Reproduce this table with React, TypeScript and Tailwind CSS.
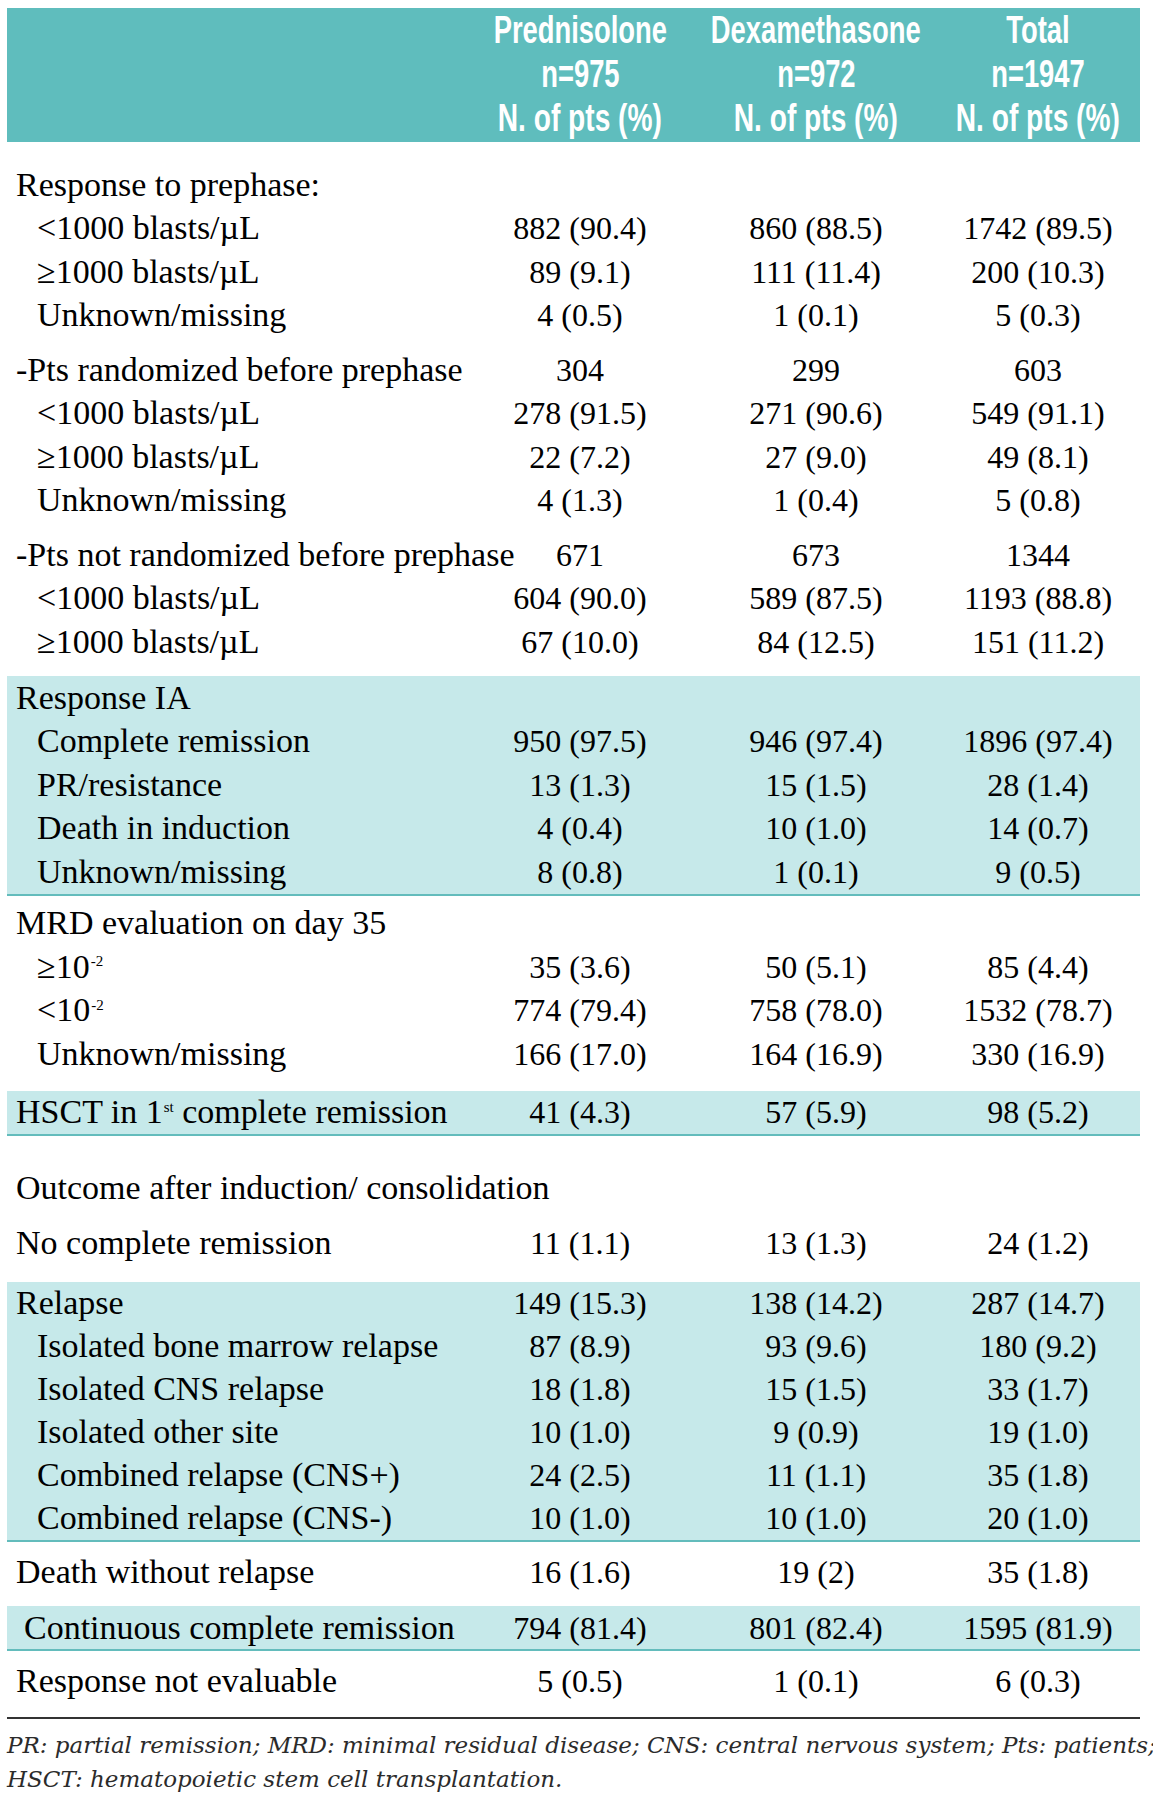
import React from 'react';

type RowData = {
  label: React.ReactNode;
  a?: string;
  b?: string;
  c?: string;
  indent?: 'none' | 'sub' | 'half';
};

const serif = { fontFamily: '"Liberation Serif", "Times New Roman", serif' };

function Row({ label, a = '', b = '', c = '', indent = 'none', tall }: RowData & { tall?: 'sm' | 'md' }) {
  const pad = indent === 'sub' ? 'pl-[30px]' : indent === 'half' ? 'pl-[17px]' : 'pl-[9px]';
  const h = tall === 'sm' ? 'h-[43px]' : 'h-[43.5px]';
  return (
    <div className={`grid grid-cols-[457px_232px_240px_204px] items-center ${h}`}>
      <div className={`${pad} text-[34px] leading-none whitespace-nowrap text-black`}>{label}</div>
      <div className="text-center text-[32px] leading-none whitespace-nowrap text-black">{a}</div>
      <div className="text-center text-[32px] leading-none whitespace-nowrap text-black">{b}</div>
      <div className="text-center text-[32px] leading-none whitespace-nowrap text-black">{c}</div>
    </div>
  );
}

function HeadCol({ name, n }: { name: string; n: string }) {
  return (
    <div className="flex flex-col items-center text-white font-bold text-[38px] leading-[44px]">
      <span className="inline-block scale-x-[0.72] whitespace-nowrap">{name}</span>
      <span className="inline-block scale-x-[0.72] whitespace-nowrap">{n}</span>
      <span className="inline-block scale-x-[0.74] whitespace-nowrap">N. of pts (%)</span>
    </div>
  );
}

const prephase: RowData[] = [
  { label: 'Response to prephase:' },
  { label: '<1000 blasts/µL', a: '882 (90.4)', b: '860 (88.5)', c: '1742 (89.5)', indent: 'sub' },
  { label: '≥1000 blasts/µL', a: '89 (9.1)', b: '111 (11.4)', c: '200 (10.3)', indent: 'sub' },
  { label: 'Unknown/missing', a: '4 (0.5)', b: '1 (0.1)', c: '5 (0.3)', indent: 'sub' },
];

const randomized: RowData[] = [
  { label: '-Pts randomized before prephase', a: '304', b: '299', c: '603' },
  { label: '<1000 blasts/µL', a: '278 (91.5)', b: '271 (90.6)', c: '549 (91.1)', indent: 'sub' },
  { label: '≥1000 blasts/µL', a: '22 (7.2)', b: '27 (9.0)', c: '49 (8.1)', indent: 'sub' },
  { label: 'Unknown/missing', a: '4 (1.3)', b: '1 (0.4)', c: '5 (0.8)', indent: 'sub' },
];

const notRandomized: RowData[] = [
  { label: '-Pts not randomized before prephase', a: '671', b: '673', c: '1344' },
  { label: '<1000 blasts/µL', a: '604 (90.0)', b: '589 (87.5)', c: '1193 (88.8)', indent: 'sub' },
  { label: '≥1000 blasts/µL', a: '67 (10.0)', b: '84 (12.5)', c: '151 (11.2)', indent: 'sub' },
];

const responseIA: RowData[] = [
  { label: 'Response IA' },
  { label: 'Complete remission', a: '950 (97.5)', b: '946 (97.4)', c: '1896 (97.4)', indent: 'sub' },
  { label: 'PR/resistance', a: '13 (1.3)', b: '15 (1.5)', c: '28 (1.4)', indent: 'sub' },
  { label: 'Death in induction', a: '4 (0.4)', b: '10 (1.0)', c: '14 (0.7)', indent: 'sub' },
  { label: 'Unknown/missing', a: '8 (0.8)', b: '1 (0.1)', c: '9 (0.5)', indent: 'sub' },
];

const sup = (t: string) => <sup className="text-[15px] align-[4px] ml-[1px]">{t}</sup>;

const mrd: RowData[] = [
  { label: 'MRD evaluation on day 35' },
  { label: <>≥10{sup('-2')}</>, a: '35 (3.6)', b: '50 (5.1)', c: '85 (4.4)', indent: 'sub' },
  { label: <>&lt;10{sup('-2')}</>, a: '774 (79.4)', b: '758 (78.0)', c: '1532 (78.7)', indent: 'sub' },
  { label: 'Unknown/missing', a: '166 (17.0)', b: '164 (16.9)', c: '330 (16.9)', indent: 'sub' },
];

const relapse: RowData[] = [
  { label: 'Relapse', a: '149 (15.3)', b: '138 (14.2)', c: '287 (14.7)' },
  { label: 'Isolated bone marrow relapse', a: '87 (8.9)', b: '93 (9.6)', c: '180 (9.2)', indent: 'sub' },
  { label: 'Isolated CNS relapse', a: '18 (1.8)', b: '15 (1.5)', c: '33 (1.7)', indent: 'sub' },
  { label: 'Isolated other site', a: '10 (1.0)', b: '9 (0.9)', c: '19 (1.0)', indent: 'sub' },
  { label: 'Combined relapse (CNS+)', a: '24 (2.5)', b: '11 (1.1)', c: '35 (1.8)', indent: 'sub' },
  { label: 'Combined relapse (CNS-)', a: '10 (1.0)', b: '10 (1.0)', c: '20 (1.0)', indent: 'sub' },
];

export default function App() {
  return (
    <div className="bg-white w-[1153px] min-h-[1800px] pt-[8px] pl-[7px]" style={serif}>
      <div className="w-[1133px]">
        {/* header */}
        <div
          className="grid grid-cols-[457px_232px_240px_204px] h-[134px] bg-[#5fbdbd]"
          style={{ fontFamily: '"Liberation Sans", Arial, sans-serif' }}
        >
          <div />
          <HeadCol name="Prednisolone" n="n=975" />
          <HeadCol name="Dexamethasone" n="n=972" />
          <HeadCol name="Total" n="n=1947" />
        </div>

        <div className="h-[21px]" />
        {prephase.map((r, i) => <Row key={i} {...r} />)}
        <div className="h-[11px]" />
        {randomized.map((r, i) => <Row key={i} {...r} />)}
        <div className="h-[11px]" />
        {notRandomized.map((r, i) => <Row key={i} {...r} />)}
        <div className="h-[12.5px]" />

        <div className="bg-[#c6e9ea] border-b-2 border-[#63bcbc]">
          {responseIA.map((r, i) => <Row key={i} {...r} />)}
        </div>

        <div className="h-[6px]" />
        {mrd.map((r, i) => <Row key={i} {...r} />)}
        <div className="h-[15px]" />

        <div className="bg-[#c6e9ea] border-b-2 border-[#63bcbc]">
          <Row
            label={<>HSCT in 1{sup('st')} complete remission</>}
            a="41 (4.3)"
            b="57 (5.9)"
            c="98 (5.2)"
            tall="sm"
          />
        </div>

        <div className="h-[31px]" />
        <Row label="Outcome after induction/ consolidation" />
        <div className="h-[11px]" />
        <Row label="No complete remission" a="11 (1.1)" b="13 (1.3)" c="24 (1.2)" />
        <div className="h-[17px]" />

        <div className="bg-[#c6e9ea] border-b-2 border-[#63bcbc]">
          {relapse.map((r, i) => <Row key={i} {...r} tall="sm" />)}
        </div>

        <div className="h-[9px]" />
        <Row label="Death without relapse" a="16 (1.6)" b="19 (2)" c="35 (1.8)" />
        <div className="h-[12px]" />

        <div className="bg-[#c6e9ea] border-b-2 border-[#63bcbc]">
          <Row label="Continuous complete remission" a="794 (81.4)" b="801 (82.4)" c="1595 (81.9)" indent="half" tall="sm" />
        </div>

        <div className="h-[8px]" />
        <Row label="Response not evaluable" a="5 (0.5)" b="1 (0.1)" c="6 (0.3)" />
        <div className="h-[14px]" />
        <div className="h-[2px] bg-[#333333]" />

        <div
          className="pt-[9px] text-[23px] leading-[34px] italic text-[#2b2b2b] whitespace-nowrap"
          style={{ fontFamily: '"DejaVu Serif", serif' }}
        >
          <div>PR: partial remission; MRD: minimal residual disease; CNS: central nervous system; Pts: patients;</div>
          <div>HSCT: hematopoietic stem cell transplantation.</div>
        </div>
      </div>
    </div>
  );
}
